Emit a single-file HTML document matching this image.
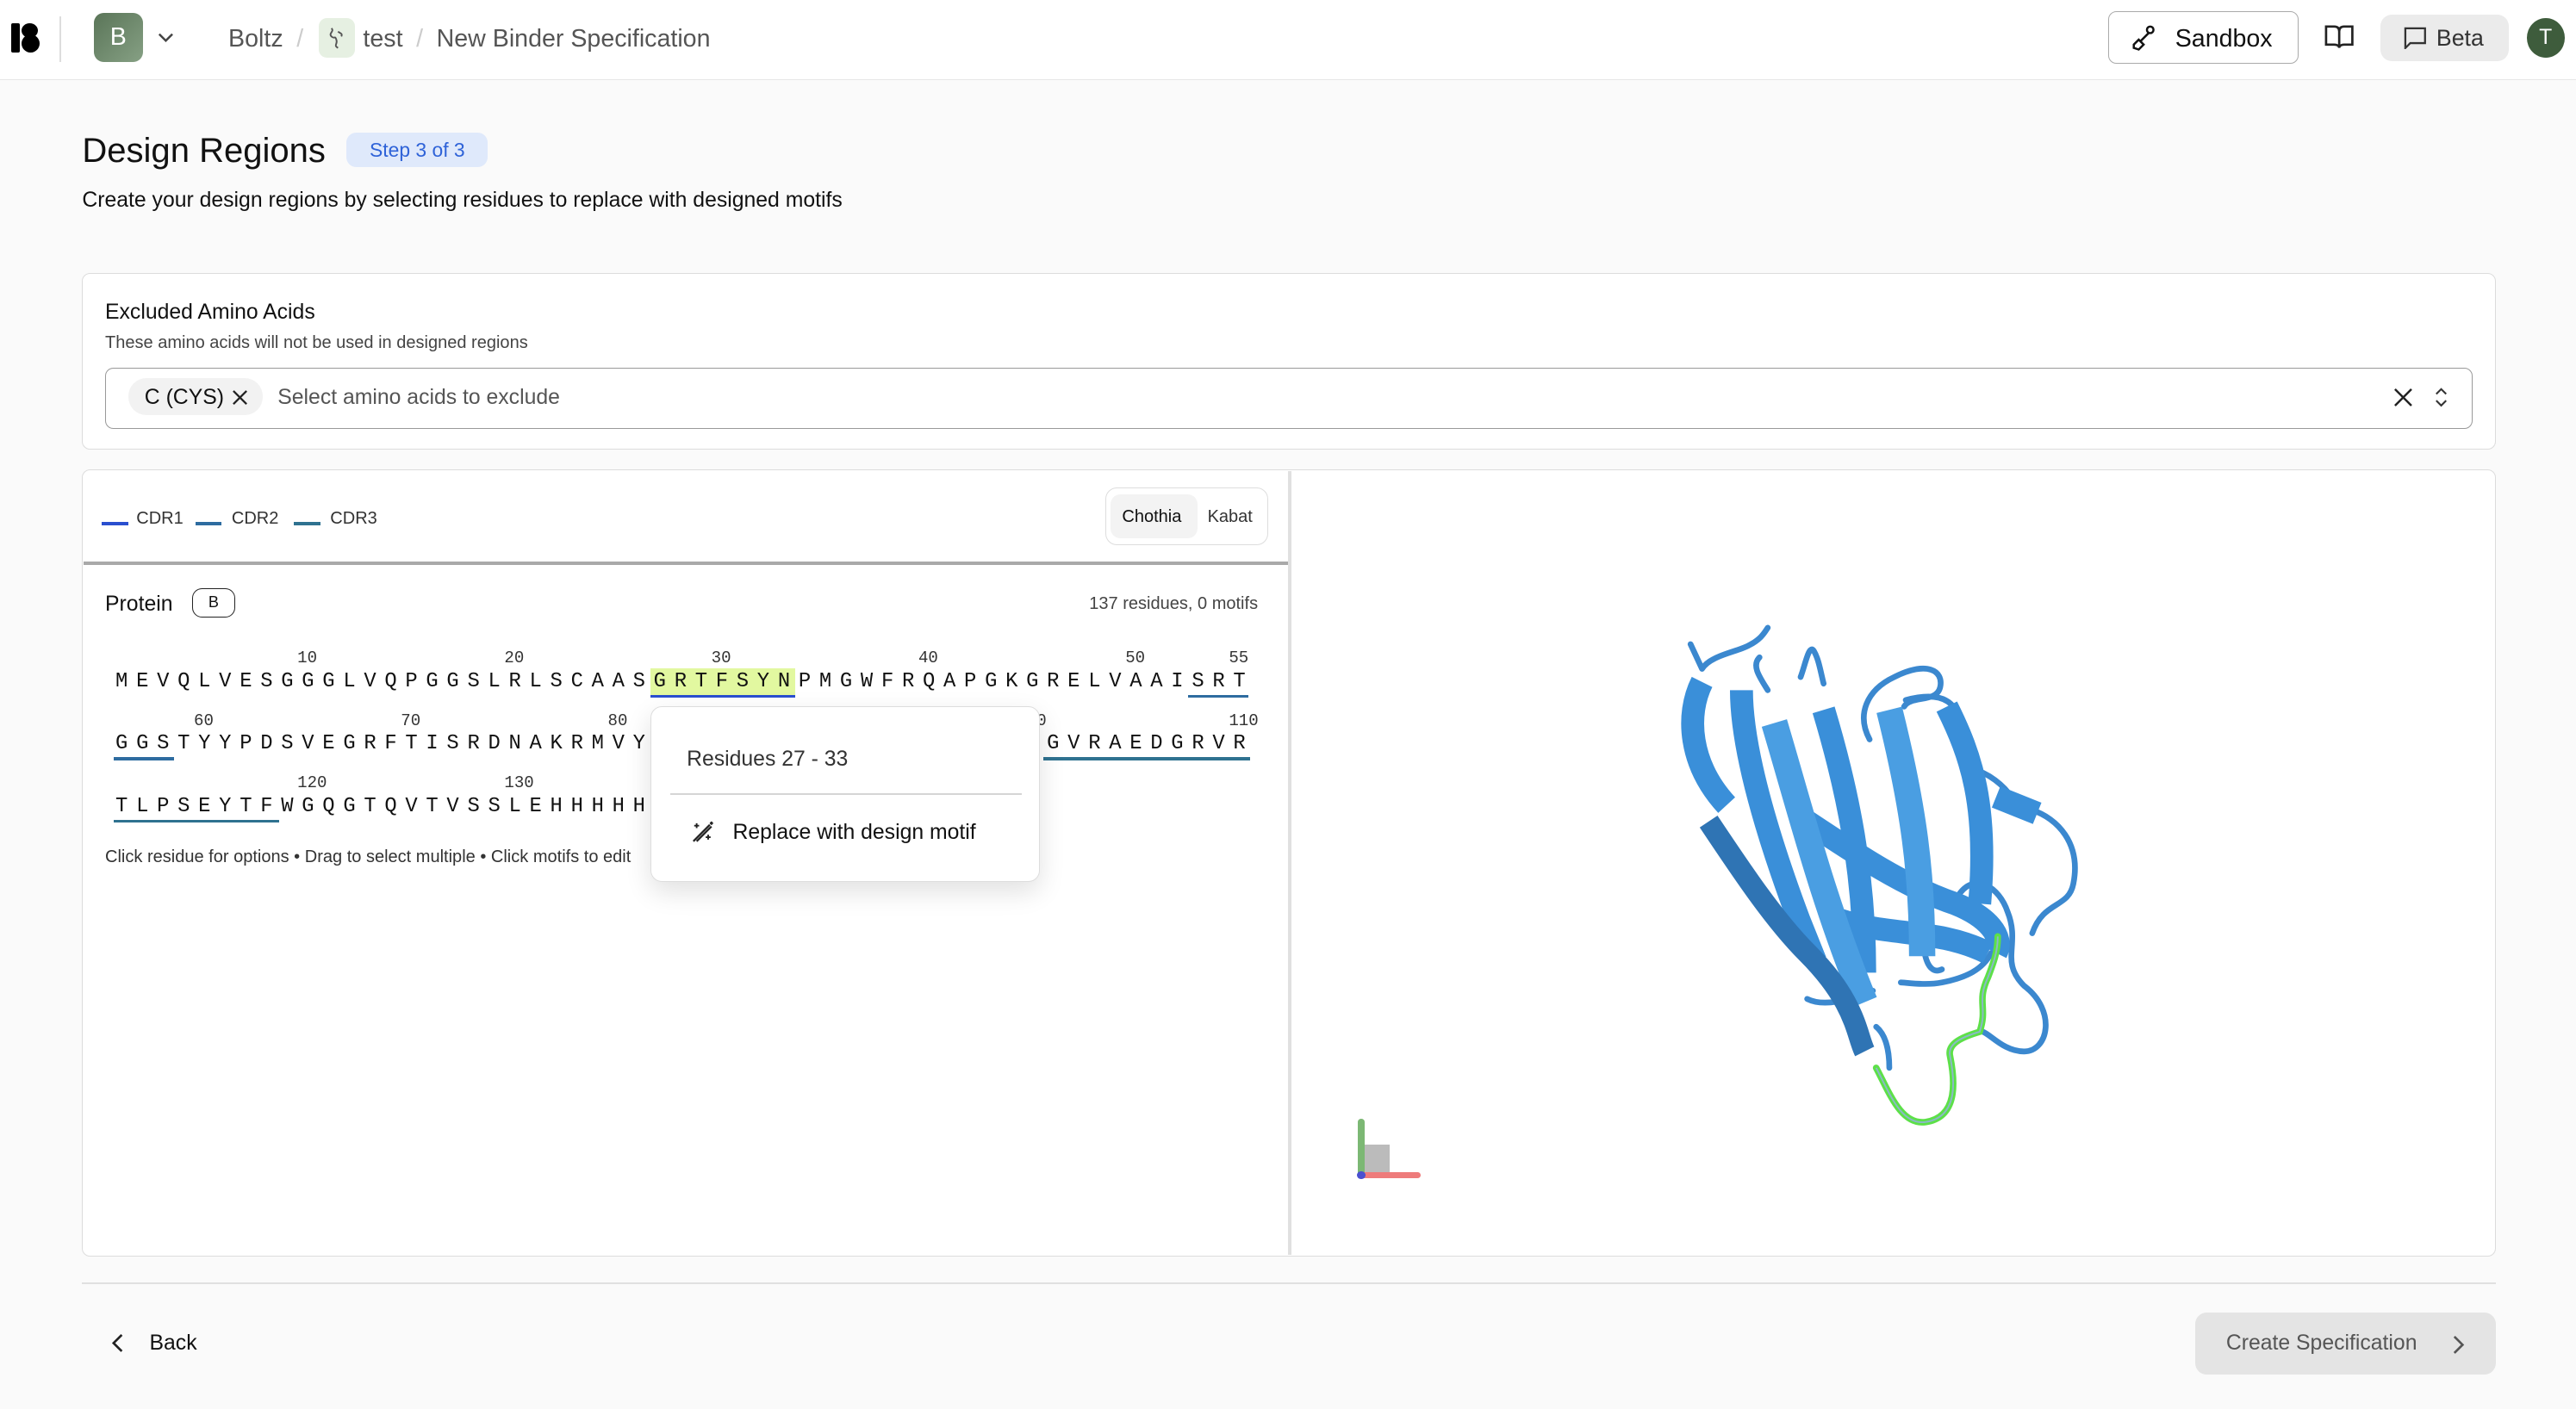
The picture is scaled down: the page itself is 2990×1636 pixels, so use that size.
<!DOCTYPE html>
<html><head><meta charset="utf-8"><style>
html{zoom:1.90689}
*{box-sizing:border-box;margin:0;padding:0}
body{width:1568px;height:858px;background:#fafafa;font-family:"Liberation Sans",sans-serif;color:#111;position:relative;overflow:hidden}
.a{position:absolute}
.t{margin-top:1px}
.hdr{left:0;top:0;width:1568px;height:49px;background:#fff;border-bottom:1px solid #e6e6e6}
.card{background:#fff;border:1px solid #dcdcdc;border-radius:5px}
.mono{font-family:"Liberation Mono",monospace;font-size:12.5px;letter-spacing:5.1px;white-space:pre;color:#111;margin-top:1px}
.num{font-family:"Liberation Mono",monospace;font-size:10px;color:#333;transform:translateX(-50%);margin-top:1px}
.ul{height:2px}
</style></head><body>
<div class="a hdr"></div>
<!-- logo -->
<div class="a" style="left:7px;top:14px;width:5px;height:18px;background:#000;border-radius:1px"></div>
<div class="a" style="left:13px;top:14px;width:10px;height:9px;background:#000;border-radius:50%"></div>
<div class="a" style="left:13px;top:21px;width:11px;height:11px;background:#000;border-radius:50%"></div>
<div class="a" style="left:36px;top:10px;width:1px;height:28px;background:#ddd"></div>
<div class="a" style="left:57px;top:8px;width:30px;height:30px;border-radius:6px;background:linear-gradient(135deg,#5a7558,#86a084);color:#fff;font-size:15px;text-align:center;line-height:30px">B</div>
<svg class="a" style="left:95px;top:17px" width="12" height="12" viewBox="0 0 12 12"><path d="M2 4l4 4 4-4" fill="none" stroke="#444" stroke-width="1.3"/></svg>
<div class="a t" style="left:139px;top:14px;font-size:15px;color:#555">Boltz <span style="color:#ccc;margin:0 4px">/</span></div>
<div class="a" style="left:194px;top:11px;width:22px;height:24px;border-radius:5px;background:#e6f0e2"></div>
<svg class="a" style="left:199px;top:15px" width="12" height="16" viewBox="0 0 12 16"><path d="M3 2c2 2-2 3 0 5s2-1 3 2-2 3 1 5M7 4c1 1 3 1 2 3" fill="none" stroke="#555" stroke-width="1"/></svg>
<div class="a t" style="left:221px;top:14px;font-size:15px;color:#555">test <span style="color:#ccc;margin:0 4px">/</span> New Binder Specification</div>
<!-- right header -->
<div class="a" style="left:1283px;top:7px;width:116px;height:32px;border:1px solid #aaa;border-radius:5px;background:#fff"></div>
<svg class="a" style="left:1296px;top:14px" width="18" height="18" viewBox="0 0 18 18"><circle cx="13" cy="4" r="2" fill="none" stroke="#111" stroke-width="1.3"/><path d="M12 6L7 11M3 13l3-3 3 3-3 3-3-1z" fill="none" stroke="#111" stroke-width="1.3"/></svg>
<div class="a t" style="left:1324px;top:14px;font-size:15px">Sandbox</div>
<svg class="a" style="left:1415px;top:14px" width="18" height="16" viewBox="0 0 18 16"><path d="M1 2h5c2 0 3 1 3 3v10c0-1-1-2-3-2H1zM17 2h-5c-2 0-3 1-3 3v10c0-1 1-2 3-2h5z" fill="none" stroke="#222" stroke-width="1.4"/></svg>
<div class="a" style="left:1449px;top:9px;width:78px;height:28px;border-radius:7px;background:#ebebeb"></div>
<svg class="a" style="left:1463px;top:16px" width="14" height="14" viewBox="0 0 14 14"><path d="M1 1h12v9H4l-3 3z" fill="none" stroke="#333" stroke-width="1.2"/></svg>
<div class="a t" style="left:1483px;top:14px;font-size:14px;color:#333">Beta</div>
<div class="a" style="left:1538px;top:11px;width:23px;height:24px;border-radius:50%;background:#3e5c3c;color:#fff;font-size:13px;text-align:center;line-height:24px">T</div>

<!-- title -->
<div class="a t" style="left:50px;top:79px;font-size:21px;color:#111">Design Regions</div>
<div class="a" style="left:211px;top:81px;width:86px;height:21px;border-radius:6px;background:#dfe9fb;color:#2f63d8;font-size:12px;text-align:center;line-height:21px">Step 3 of 3</div>
<div class="a t" style="left:50px;top:114px;font-size:13px;color:#111">Create your design regions by selecting residues to replace with designed motifs</div>

<!-- card 1 -->
<div class="a card" style="left:50px;top:166px;width:1469px;height:108px"></div>
<div class="a t" style="left:64px;top:182px;font-size:13px">Excluded Amino Acids</div>
<div class="a" style="left:64px;top:203px;font-size:10.5px;color:#444">These amino acids will not be used in designed regions</div>
<div class="a" style="left:64px;top:224px;width:1441px;height:37px;border:1px solid #999;border-radius:5px;background:#fff"></div>
<div class="a" style="left:78px;top:230px;width:82px;height:23px;border-radius:11px;background:#f2f2f2"></div>
<div class="a t" style="left:88px;top:234px;font-size:13px">C (CYS)</div>
<svg class="a" style="left:141px;top:237px" width="10" height="10" viewBox="0 0 10 10"><path d="M1 1l8 8M9 1L1 9" stroke="#222" stroke-width="1.2"/></svg>
<div class="a t" style="left:169px;top:234px;font-size:13px;color:#555">Select amino acids to exclude</div>
<svg class="a" style="left:1457px;top:236px" width="12" height="12" viewBox="0 0 12 12"><path d="M1 1l10 10M11 1L1 11" stroke="#222" stroke-width="1.3"/></svg>
<svg class="a" style="left:1481px;top:235px" width="10" height="14" viewBox="0 0 10 14"><path d="M2 5l3-3 3 3M2 9l3 3 3-3" fill="none" stroke="#333" stroke-width="1.1"/></svg>

<!-- card 2 -->
<div class="a card" style="left:50px;top:286px;width:1469px;height:479px"></div>
<div class="a" style="left:784px;top:287px;width:2px;height:477px;background:#e0e0e0"></div>
<div class="a" style="left:51px;top:342px;width:733px;height:2px;background:#a9a9a9"></div>
<div class="a" style="left:62px;top:318px;width:16px;height:2px;background:#2a4fcf"></div>
<div class="a t" style="left:83px;top:309px;font-size:10.5px;color:#333">CDR1</div>
<div class="a" style="left:119px;top:318px;width:16px;height:2px;background:#2e6ca0"></div>
<div class="a t" style="left:141px;top:309px;font-size:10.5px;color:#333">CDR2</div>
<div class="a" style="left:179px;top:318px;width:16px;height:2px;background:#2f7290"></div>
<div class="a t" style="left:201px;top:309px;font-size:10.5px;color:#333">CDR3</div>
<div class="a" style="left:673px;top:297px;width:99px;height:35px;border:1px solid #ddd;border-radius:7px;background:#fff"></div>
<div class="a" style="left:676px;top:301px;width:53px;height:27px;border-radius:6px;background:#f3f3f3"></div>
<div class="a t" style="left:683px;top:308px;font-size:10.5px;color:#111">Chothia</div>
<div class="a t" style="left:735px;top:308px;font-size:10.5px;color:#333">Kabat</div>

<div class="a t" style="left:64px;top:360px;font-size:13px">Protein</div>
<div class="a" style="left:117px;top:358px;width:26px;height:18px;border:1px solid #222;border-radius:6px;font-size:9.5px;text-align:center;line-height:16px">B</div>
<div class="a t" style="left:663px;top:361px;font-size:10.5px;color:#444">137 residues, 0 motifs</div>

<!-- sequence row 1 -->
<div class="a num" style="left:187px;top:394px">10</div>
<div class="a num" style="left:313px;top:394px">20</div>
<div class="a num" style="left:439px;top:394px">30</div>
<div class="a num" style="left:565px;top:394px">40</div>
<div class="a num" style="left:691px;top:394px">50</div>
<div class="a num" style="left:754px;top:394px">55</div>
<div class="a" style="left:396px;top:407px;width:88px;height:16px;background:#e2f8a0"></div>
<div class="a mono" style="left:70.3px;top:407px">MEVQLVESGGGLVQPGGSLRLSCAASGRTFSYNPMGWFRQAPGKGRELVAAISRT</div>
<div class="a ul" style="left:396px;top:423px;width:88px;background:#2a4fcf"></div>
<div class="a ul" style="left:723px;top:423px;width:37px;background:#2e6ca0"></div>
<!-- row 2 -->
<div class="a num" style="left:124px;top:432px">60</div>
<div class="a num" style="left:250px;top:432px">70</div>
<div class="a num" style="left:376px;top:432px">80</div>
<div class="a num" style="left:628px;top:432px">100</div>
<div class="a num" style="left:757px;top:432px">110</div>
<div class="a mono" style="left:70.3px;top:445px">GGSTYYPDSVEGRFTISRDNAKRMVYLQMNSLKPEDTAVYYCAADGVRAEDGRVR</div>
<div class="a ul" style="left:69px;top:461px;width:37px;background:#2e6ca0"></div>
<div class="a ul" style="left:635px;top:461px;width:126px;background:#2f7290"></div>
<!-- row 3 -->
<div class="a num" style="left:190px;top:470px">120</div>
<div class="a num" style="left:316px;top:470px">130</div>
<div class="a mono" style="left:70.3px;top:483px">TLPSEYTFWGQGTQVTVSSLEHHHHHH</div>
<div class="a ul" style="left:69px;top:499px;width:101px;background:#2f7290"></div>
<div class="a t" style="left:64px;top:515px;font-size:10.5px;color:#333;white-space:nowrap">Click residue for options • Drag to select multiple • Click motifs to edit</div>

<!-- popup -->
<div class="a" style="left:396px;top:430px;width:237px;height:107px;background:#fff;border:1px solid #ddd;border-radius:7px;box-shadow:0 6px 16px rgba(0,0,0,0.12)"></div>
<div class="a t" style="left:418px;top:454px;font-size:13px;color:#333">Residues 27 - 33</div>
<div class="a" style="left:408px;top:483px;width:214px;height:1px;background:#d5d5d5"></div>
<svg class="a" style="left:420px;top:499px" width="15" height="15" viewBox="0 0 15 15"><path d="M2 13L12 3M4 13l9-9" stroke="#222" stroke-width="1.2"/><path d="M4 2v3M2.5 3.5h3M11 9v3M9.5 10.5h3M13 1v2M12 2h2" stroke="#222" stroke-width="1"/></svg>
<div class="a t" style="left:446px;top:499px;font-size:13px;color:#111">Replace with design motif</div>

<!-- protein -->
<svg class="a" style="left:1010px;top:370px" width="290" height="330" viewBox="1010 370 290 330">
<g fill="none" stroke="#3b88cf" stroke-linecap="round" stroke-linejoin="round">
<path d="M1029 392l7 15c5-8 20-10 28-14s10-8 12-11M1071 400c-5 5 0 12 5 20M1096 412c3-8 5-20 8-16 3 5 4 12 6 20M1138 450c-8-15-2-30 15-38 20-10 30-4 28 6-2 10-18 5-22 12M1160 426c15-4 28-3 32 10s-3 30 8 32c10 2 20 10 25 18M1237 493c15 5 30 20 25 45-3 15-18 10-25 30M1172 550c-4 25 0 45 10 40M1192 545c10-15 25-5 30 10 8 20-5 30 10 45 20 15 15 40 0 40-12 0-20-10-25-12M1212 580c-5 10-15 15-30 18-10 2-22 0-25 0M1140 603c-15 6-30 10-40 5M1150 650c0-10-2-20-8-25" stroke-width="3.5"/>
<path d="M1036 415c-10 20-8 50 15 75M1060 420c0 40 20 100 35 140l10 25M1110 432c15 50 25 100 25 160M1185 430c15 30 25 60 20 120M1215 485l25 10M1100 500c30 20 60 40 90 50 20 8 30 20 25 30M1120 560c30 10 60 5 90 20" stroke-width="14" stroke="#3a8fd9" stroke-linecap="butt"/>
<path d="M1080 440c15 50 30 110 55 170M1150 432c15 60 20 100 20 150" stroke-width="16" stroke="#4a9ee2" stroke-linecap="butt"/>
<path d="M1040 500c20 30 40 60 60 80 30 30 30 50 35 60" stroke-width="13" stroke="#2f74b4" stroke-linecap="butt"/>
</g>
<path d="M1142 650c8 15 15 35 30 33 20-3 18-25 15-40-2-8 8-12 18-15 5-15-2-18 5-33 3-8 6-15 6-25" fill="none" stroke="#5de048" stroke-width="4" stroke-linecap="round"/>
<path d="M1142 650c8 15 15 35 30 33 20-3 18-25 15-40-2-8 8-12 18-15 5-15-2-18 5-33 3-8 6-15 6-25" fill="none" stroke="#8ab8c8" stroke-width="1"/>
</svg>
<!-- axes -->
<div class="a" style="left:829px;top:697px;width:17px;height:17px;background:#bbb"></div>
<div class="a" style="left:826.5px;top:681px;width:4px;height:36px;border-radius:2px;background:#7cb874"></div>
<div class="a" style="left:827px;top:713.5px;width:38px;height:4px;border-radius:2px;background:#ee7b7b"></div>
<div class="a" style="left:826px;top:713px;width:5px;height:5px;border-radius:50%;background:#4a50d0"></div>

<!-- footer -->
<div class="a" style="left:50px;top:781px;width:1469px;height:1px;background:#e0e0e0"></div>
<svg class="a" style="left:67px;top:812px" width="10" height="12" viewBox="0 0 10 12"><path d="M7 1L2 6l5 5" fill="none" stroke="#222" stroke-width="1.4"/></svg>
<div class="a t" style="left:91px;top:810px;font-size:13px">Back</div>
<div class="a" style="left:1336px;top:799px;width:183px;height:38px;border-radius:7px;background:#e4e4e4"></div>
<div class="a t" style="left:1355px;top:810px;font-size:13px;color:#555">Create Specification</div>
<svg class="a" style="left:1492px;top:813px" width="9" height="12" viewBox="0 0 9 12"><path d="M2 1l5 5-5 5" fill="none" stroke="#555" stroke-width="1.4"/></svg>
</body></html>
